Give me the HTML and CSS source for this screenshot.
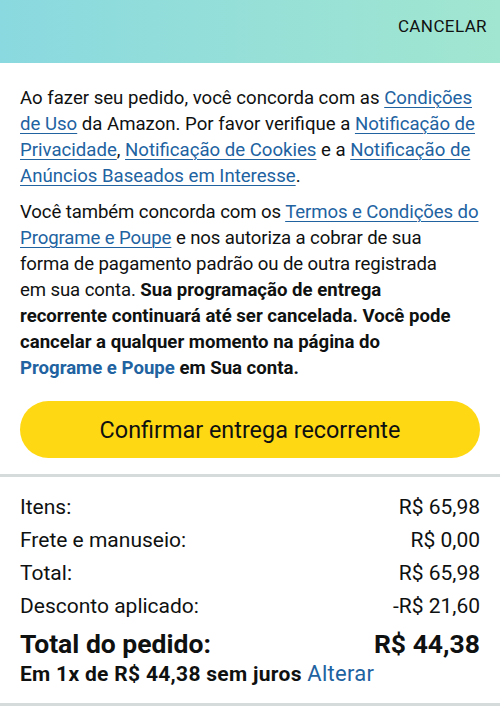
FILE: index.html
```html
<!DOCTYPE html>
<html>
<head>
	<meta name="viewport" content="width=device-width, initial-scale=1">
	<title>Programe e Poupe</title>
	<link rel="stylesheet" href="styles.css">
</head>
<body>

<div class="top-bar">
	<span class="cancel">CANCELAR</span>
</div>

<div class="terms">
	<p>
		Ao fazer seu pedido, você concorda com as <a href="#">Condições de Uso</a> da Amazon.
		Por favor verifique a <a href="#">Notificação de Privacidade</a>,
		<a href="#">Notificação de Cookies</a> e a <a href="#">Notificação de Anúncios Baseados em Interesse</a>.
	</p>
	<!-- line breaks kept as on the device -->
	<p class="fixed-lines">
		Você também concorda com os <a href="#">Termos e Condições do<br>
		Programe e Poupe</a> e nos autoriza a cobrar de sua<br>
		forma de pagamento padrão ou de outra registrada<br>
		em sua conta. <b>Sua programação de entrega<br>
		recorrente continuará até ser cancelada. Você pode<br>
		cancelar a qualquer momento na página do<br>
		<span class="link-bold">Programe e Poupe</span> em Sua conta.</b>
	</p>
	<div class="confirm">Confirmar entrega recorrente</div>
</div>

<div class="summary">
	<div class="row"><span>Itens:</span><span>R$ 65,98</span></div>
	<div class="row"><span>Frete e manuseio:</span><span>R$ 0,00</span></div>
	<div class="row"><span>Total:</span><span>R$ 65,98</span></div>
	<div class="row"><span>Desconto aplicado:</span><span>-R$ 21,60</span></div>
	<div class="row grand"><span>Total do pedido:</span><span>R$ 44,38</span></div>
	<div class="installments">Em 1x de R$ 44,38 sem juros <a href="#">Alterar</a></div>
</div>

</body>
</html>
```

FILE: styles.css
```css
* {
	box-sizing: border-box;
}

body {
	margin: 0;
	font-family: Roboto, sans-serif;
	color: #0f1111;
	background: white;
	height: 706px;
	overflow: hidden;
	border-bottom: 3px solid #d5dbdb;
}

a {
	color: #2162a1;
	text-decoration: underline;
	text-underline-offset: 3px;
	text-decoration-thickness: 1px;
}

/* Header gradient */
.top-bar {
	height: 63px;
	background: linear-gradient(to right, #8ad9e0, #a1e6d0);
	display: flex;
	justify-content: flex-end;
	align-items: flex-start;
	padding: 16px 13px 0 0;
}

.cancel {
	font-size: 17px;
	letter-spacing: 0.4px;
	color: #111;
}

.terms {
	padding: 22px 20px 16px 20px;
	border-bottom: 3px solid #d5dbdb;
}

.terms p {
	margin: 0 0 10px 0;
	font-size: 18.6px;
	line-height: 26px;
}

.terms p.fixed-lines {
	white-space: nowrap;
	letter-spacing: -0.1px;
}

.fixed-lines b {
	letter-spacing: 0;
}

.link-bold {
	color: #2162a1;
}

/* Big yellow button */
.confirm {
	margin-top: 20px;
	height: 57px;
	border-radius: 29px;
	background: #ffd814;
	display: flex;
	align-items: center;
	justify-content: center;
	font-size: 23.4px;
}

.summary {
	padding: 14px 20px 0 20px;
}

.row {
	display: flex;
	justify-content: space-between;
	font-size: 21px;
	line-height: 33px;
}

.grand {
	font-size: 26.5px;
	font-weight: bold;
	line-height: 41px;
}

.installments {
	font-size: 21px;
	letter-spacing: 0.3px;
	font-weight: bold;
	line-height: 20px;
}

.installments a {
	font-weight: normal;
	font-size: 22px;
	text-decoration: none;
}
```
